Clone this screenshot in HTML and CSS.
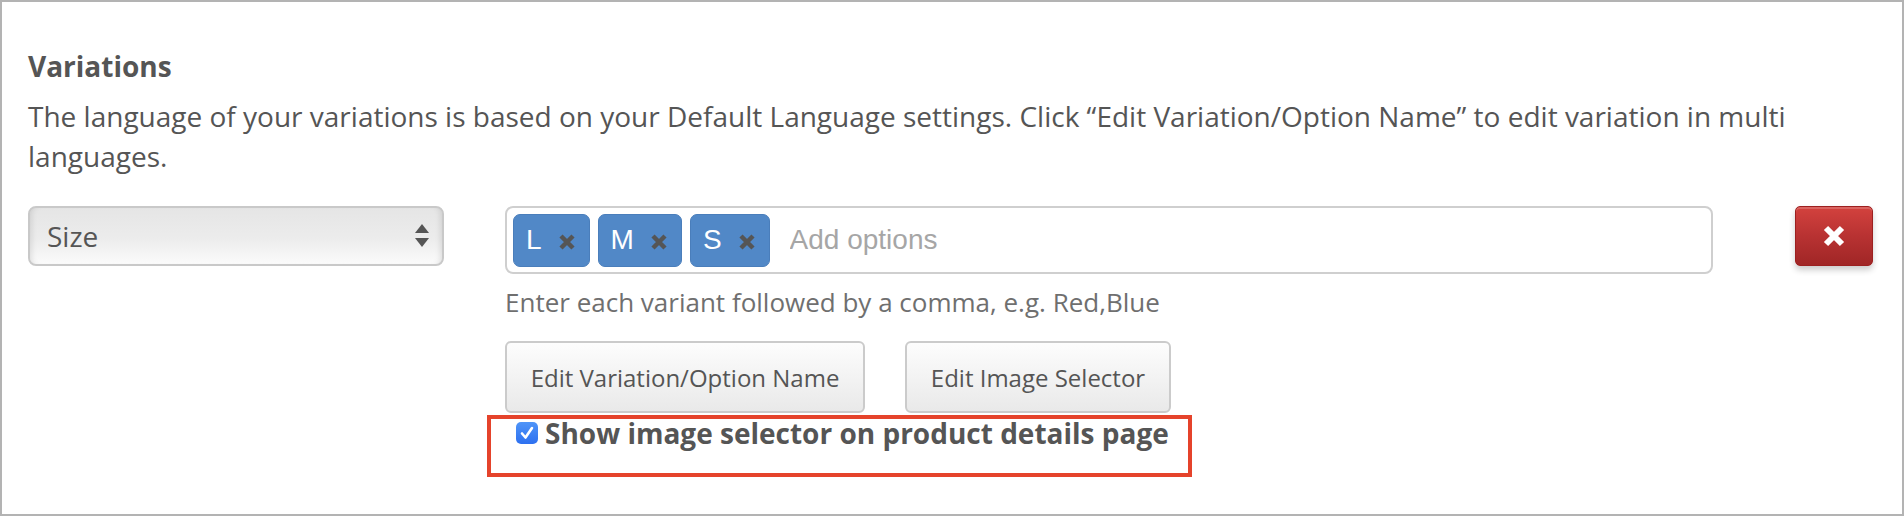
FILE: index.html
```html
<!DOCTYPE html>
<html lang="en">
<head>
    <meta charset="UTF-8">
    <meta name="viewport" content="width=device-width, initial-scale=1.0">
    <title>Variations</title>
    <link rel="stylesheet" href="styles.css">
</head>
<body>

    <div id="variations">
        <h4 class="section-title">Variations</h4>
        <p class="section-desc">The language of your variations is based on your Default Language settings. Click &ldquo;Edit Variation/Option Name&rdquo; to edit variation in multi languages.</p>

        <div class="variant-row">
            <!-- Variation name -->
            <div class="variant-name">
                <div class="select-box">
                    <span>Size</span>
                    <svg class="select-arrows" width="14" height="24" viewBox="0 0 14 24">
                        <path d="M7 0 L14 9 L0 9 Z" fill="#555"/>
                        <path d="M0 14 L14 14 L7 23 Z" fill="#555"/>
                    </svg>
                </div>
            </div>

            <!-- Options -->
            <div class="variant-options">
                <div class="tags-input">
                    <span class="tag">L<svg class="tag-remove" width="16" height="16" viewBox="0 0 16 16"><path d="M2 2 L14 14 M14 2 L2 14" stroke="#555" stroke-width="4.5"/></svg></span>
                    <span class="tag">M<svg class="tag-remove" width="16" height="16" viewBox="0 0 16 16"><path d="M2 2 L14 14 M14 2 L2 14" stroke="#555" stroke-width="4.5"/></svg></span>
                    <span class="tag">S<svg class="tag-remove" width="16" height="16" viewBox="0 0 16 16"><path d="M2 2 L14 14 M14 2 L2 14" stroke="#555" stroke-width="4.5"/></svg></span>
                    <input type="text" class="tag-entry" placeholder="Add options" />
                </div>
                <p class="help-text">Enter each variant followed by a comma, e.g. Red,Blue</p>
                <div class="option-actions">
                    <button class="btn">Edit Variation/Option Name</button>
                    <button class="btn">Edit Image Selector</button>
                </div>
                <label class="image-toggle">
                    <span class="checkbox">
                        <svg width="22" height="22" viewBox="0 0 22 22"><path d="M6 11.5 L9.5 15.5 L16 6" fill="none" stroke="#fff" stroke-width="2.6" stroke-linecap="round" stroke-linejoin="round"/></svg>
                    </span>
                    Show image selector on product details page
                </label>
            </div>

            <!-- Remove variation -->
            <div class="variant-remove">
                <button class="btn-remove">
                    <svg width="22" height="22" viewBox="0 0 22 22"><path d="M3 3 L19 19 M19 3 L3 19" stroke="#fff" stroke-width="6"/></svg>
                </button>
            </div>
        </div>
    </div>

</body>
</html>
```

FILE: styles.css
```css
/* Reset */
html, body, h4, p {
    margin: 0;
    padding: 0;
}

body {
    font-family: 'Open Sans', sans-serif;
    color: #555;
    background: #fff;
}

#variations {
    box-sizing: border-box;
    height: 516px;
    border: 2px solid #b3b3b3;
    padding: 44px 29px 0 26px;
}

.section-title {
    font-size: 28px;
    font-weight: bold;
    line-height: 40px;
    margin-bottom: 10px;
}

.section-desc {
    font-size: 28px;
    line-height: 40px;
    margin-bottom: 30px;
}

/* Row */
.variant-row {
    display: grid;
    grid-template-columns: 416px 1208px 78px;
    column-gap: 61px;
}

.variant-remove {
    margin-left: 21px;
}

/* Select */
.select-box {
    box-sizing: border-box;
    height: 60px;
    border: 2px solid #c9c9c9;
    border-radius: 8px;
    background: linear-gradient(#e5e5e5, #ececec 55%, #fbfbfb);
    box-shadow: inset 6px 0 6px -5px rgba(0, 0, 0, 0.12), inset -6px 0 6px -5px rgba(0, 0, 0, 0.12);
    display: flex;
    align-items: center;
    justify-content: space-between;
    padding: 0 13px 0 17px;
    font-size: 28px;
}

/* Tags */
.tags-input {
    box-sizing: border-box;
    height: 68px;
    border: 2px solid #cfcfcf;
    border-radius: 8px;
    display: flex;
    align-items: center;
    gap: 8px;
    padding: 0 6px;
}

.tag {
    box-sizing: border-box;
    height: 53px;
    display: flex;
    align-items: center;
    padding: 0 14px 0 12px;
    background: #5188c7;
    border: 1px solid #4a7ebb;
    border-radius: 7px;
    color: #fff;
    font-family: 'Liberation Sans', Arial, sans-serif;
    font-size: 28px;
}

.tag-remove {
    margin-left: 17px;
    margin-top: 3px;
}

.tag-entry {
    flex: 1;
    margin-left: 12px;
    border: none;
    outline: none;
    padding: 0;
    font-family: 'Liberation Sans', Arial, sans-serif;
    font-size: 28px;
    color: #555;
}

.tag-entry::placeholder {
    color: #a6a6a6;
}

.help-text {
    font-size: 26px;
    line-height: 36px;
    color: #6f6f6f;
    margin-top: 10px;
}

/* Buttons */
.option-actions {
    display: flex;
    gap: 40px;
    margin-top: 21px;
}

.btn {
    height: 72px;
    padding: 0;
    white-space: nowrap;
    font-family: 'Open Sans', sans-serif;
    font-size: 24px;
    color: #555;
    background: linear-gradient(#fdfdfd, #e9e9e9);
    border: 2px solid #cbcbcb;
    border-radius: 6px;
}

.btn:nth-child(1) {
    width: 360px;
}

.btn:nth-child(2) {
    width: 266px;
}

/* Checkbox highlight */
.image-toggle {
    box-sizing: border-box;
    width: 705px;
    height: 62px;
    margin: 2px 0 0 -18px;
    padding: 1px 0 0 25px;
    border: 4px solid #e5432b;
    display: flex;
    align-items: flex-start;
    gap: 7px;
    font-size: 28px;
    font-weight: bold;
    line-height: 26px;
}

.checkbox {
    width: 22px;
    height: 22px;
    flex: none;
    margin-top: 2px;
    border-radius: 5px;
    background: linear-gradient(#4f95f8, #2d70f0);
}

.checkbox svg {
    display: block;
}

/* Remove button */
.btn-remove {
    width: 78px;
    height: 60px;
    display: flex;
    align-items: center;
    justify-content: center;
    padding: 0;
    border: 1px solid #9c2020;
    border-radius: 5px;
    background: linear-gradient(#d3423e, #b83232 50%, #a02626);
    box-shadow: inset 0 2px 0 rgba(255, 255, 255, 0.18), 0 4px 6px rgba(0, 0, 0, 0.2);
}
```
